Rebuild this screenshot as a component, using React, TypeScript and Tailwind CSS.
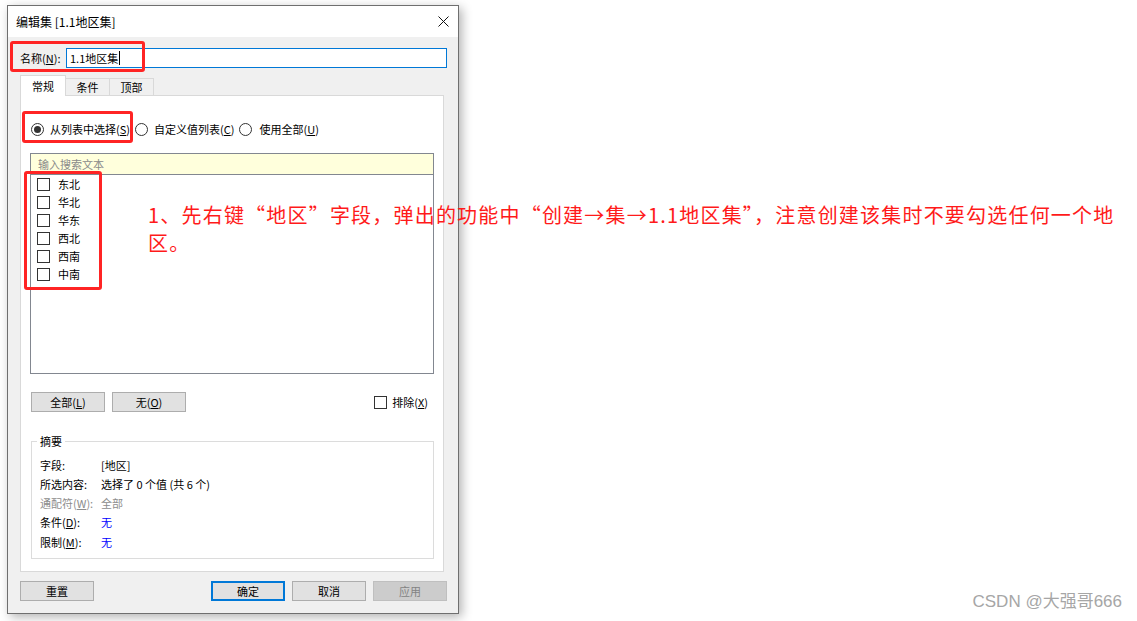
import React from 'react';

const ui = { fontFamily: '"Noto Sans CJK SC", "Noto Sans", sans-serif' };

// underline the access key like a Windows dialog does
const Key = ({ k }: { k: string }) => (
  <>
    (<span className="underline underline-offset-[1px]">{k}</span>)
  </>
);

const Radio = ({ checked }: { checked?: boolean }) => (
  <span className="flex h-[13px] w-[13px] shrink-0 items-center justify-center rounded-full border border-[#333] bg-white">
    {checked && <span className="h-[7px] w-[7px] rounded-full bg-[#333]" />}
  </span>
);

const Box = () => <span className="block h-[13px] w-[13px] shrink-0 border border-[#333] bg-white" />;

const Btn = ({ children, primary, disabled }: { children: React.ReactNode; primary?: boolean; disabled?: boolean }) => (
  <div
    className={
      'flex h-[20px] w-[74px] items-center justify-center text-[11px] ' +
      (primary
        ? 'border-2 border-[#0078d7] bg-[#e1e1e1] text-black'
        : disabled
          ? 'border border-[#bfbfbf] bg-[#cccccc] text-[#838383]'
          : 'border border-[#adadad] bg-[#e1e1e1] text-black')
    }
  >
    {children}
  </div>
);

const regions = ['东北', '华北', '华东', '西北', '西南', '中南'];

const summary: { label: React.ReactNode; value: string; tone: string; labelTone?: string }[] = [
  { label: '字段:', value: '[地区]', tone: 'text-black' },
  { label: '所选内容:', value: '选择了 0 个值 (共 6 个)', tone: 'text-black' },
  { label: <>通配符<Key k="W" />:</>, value: '全部', tone: 'text-[#8d8d8d]', labelTone: 'text-[#8d8d8d]' },
  { label: <>条件<Key k="D" />:</>, value: '无', tone: 'text-[#0000ff]' },
  { label: <>限制<Key k="M" />:</>, value: '无', tone: 'text-[#0000ff]' },
];

export default function App() {
  return (
    <div className="relative h-[621px] w-[1137px] overflow-hidden bg-white" style={ui}>
      <div className="pl-[7px] pt-[5px]">
        {/* dialog window */}
        <div className="flex h-[609px] w-[452px] flex-col border border-[#6f6f6f] shadow-[3px_3px_10px_rgba(0,0,0,0.3)]">
          <div className="flex h-[31px] items-center justify-between bg-white pl-[8px] pr-[9px] text-[12px] text-black">
            <span>编辑集 [1.1地区集]</span>
            <svg width="11" height="11" viewBox="0 0 11 11" className="mb-[1px]">
              <path d="M0.5 0.5 L10.5 10.5 M10.5 0.5 L0.5 10.5" stroke="#111" strokeWidth="1" />
            </svg>
          </div>

          <div className="flex flex-1 flex-col bg-[#f0f0f0] pl-[12px] pr-[11px] pt-[11px] text-[11px] text-black">
            {/* name row */}
            <div className="flex h-[20px] items-center">
              <span className="w-[46px] shrink-0">名称<Key k="N" />:</span>
              <div className="flex h-[20px] w-[381px] items-center border border-[#0078d7] bg-white pl-[3px]">
                <span>1.1地区集</span>
                <span className="ml-px h-[14px] w-px bg-black" />
              </div>
            </div>

            {/* tabs */}
            <div className="relative z-10 mt-[7px] flex h-[20px] items-end">
              <div className="mb-[-1px] flex h-[21px] w-[46px] items-center justify-center border border-b-0 border-[#d9d9d9] bg-white">常规</div>
              <div className="flex h-[17px] w-[44px] items-center justify-center border-t border-r border-[#d9d9d9]">条件</div>
              <div className="flex h-[17px] w-[44px] items-center justify-center border-t border-r border-[#d9d9d9]">顶部</div>
            </div>

            {/* tab page */}
            <div className="flex h-[477px] w-[424px] flex-col border border-[#d9d9d9] bg-white">
              <div className="mt-[25px] flex h-[16px] items-center pl-[10px]">
                <Radio checked />
                <span className="ml-[6px]">从列表中选择<Key k="S" /></span>
                <span className="ml-[5px]"><Radio /></span>
                <span className="ml-[6px]">自定义值列表<Key k="C" /></span>
                <span className="ml-[5px]"><Radio /></span>
                <span className="ml-[7px]">使用全部<Key k="U" /></span>
              </div>

              {/* list box */}
              <div className="ml-[9px] mt-[16px] flex h-[221px] w-[404px] flex-col border border-[#828790]">
                <div className="flex h-[21px] items-center border-b border-[#828790] bg-[#ffffdc] pl-[7px] text-[#8a8a8a]">输入搜索文本</div>
                <div className="flex flex-col">
                  {regions.map((r) => (
                    <div key={r} className="flex h-[18px] items-center pl-[6px]">
                      <Box />
                      <span className="ml-[8px]">{r}</span>
                    </div>
                  ))}
                </div>
              </div>

              <div className="mt-[18px] flex h-[20px] items-center pl-[10px] pr-[15px]">
                <Btn>全部<Key k="L" /></Btn>
                <span className="ml-[7px]"><Btn>无<Key k="O" /></Btn></span>
                <div className="ml-auto flex items-center">
                  <Box />
                  <span className="ml-[5px]">排除<Key k="X" /></span>
                </div>
              </div>

              {/* summary group */}
              <div className="relative ml-[10px] mt-[29px] h-[118px] w-[403px] border border-[#dcdcdc] pl-[8px] pt-[14px]">
                <span className="absolute left-[5px] top-[-9px] bg-white px-[3px] leading-[16px]">摘要</span>
                {summary.map((s, i) => (
                  <div key={i} className={'flex h-[19px] items-center ' + (i === 4 ? 'mt-px' : '')}>
                    <span className={'w-[61px] shrink-0 ' + (s.labelTone ?? '')}>{s.label}</span>
                    <span className={s.tone}>{s.value}</span>
                  </div>
                ))}
              </div>
            </div>

            {/* bottom buttons */}
            <div className="mt-[9px] flex items-center">
              <Btn>重置</Btn>
              <div className="ml-auto flex gap-[7px]">
                <Btn primary>确定</Btn>
                <Btn>取消</Btn>
                <Btn disabled>应用</Btn>
              </div>
            </div>
          </div>
        </div>
      </div>

      {/* red annotation marks laid over the screenshot */}
      <div className="absolute left-[10px] top-[41px] h-[31px] w-[135px] rounded-[3px] border-[3px] border-[#ff2424]" />
      <div className="absolute left-[22px] top-[111px] h-[32px] w-[111px] rounded-[3px] border-[3px] border-[#ff2424]" />
      <div className="absolute left-[24px] top-[171px] h-[119px] w-[78px] rounded-[3px] border-[3px] border-[#ff2424]" />

      <div className="absolute left-[148px] top-[201px] whitespace-nowrap text-[20px] leading-[28px] tracking-[1.2px] text-[#ff1a1a]">
        1、先右键“地区”字段，弹出的功能中“创建→集→1.1地区集”，注意创建该集时不要勾选任何一个地
        <br />
        区。
      </div>

      <div
        className="absolute bottom-[7px] right-[15px] text-[17px] text-[#a6a6a6]"
        style={{ fontFamily: '"Liberation Sans", "Noto Sans CJK SC", sans-serif' }}
      >
        CSDN @大强哥666
      </div>
    </div>
  );
}
